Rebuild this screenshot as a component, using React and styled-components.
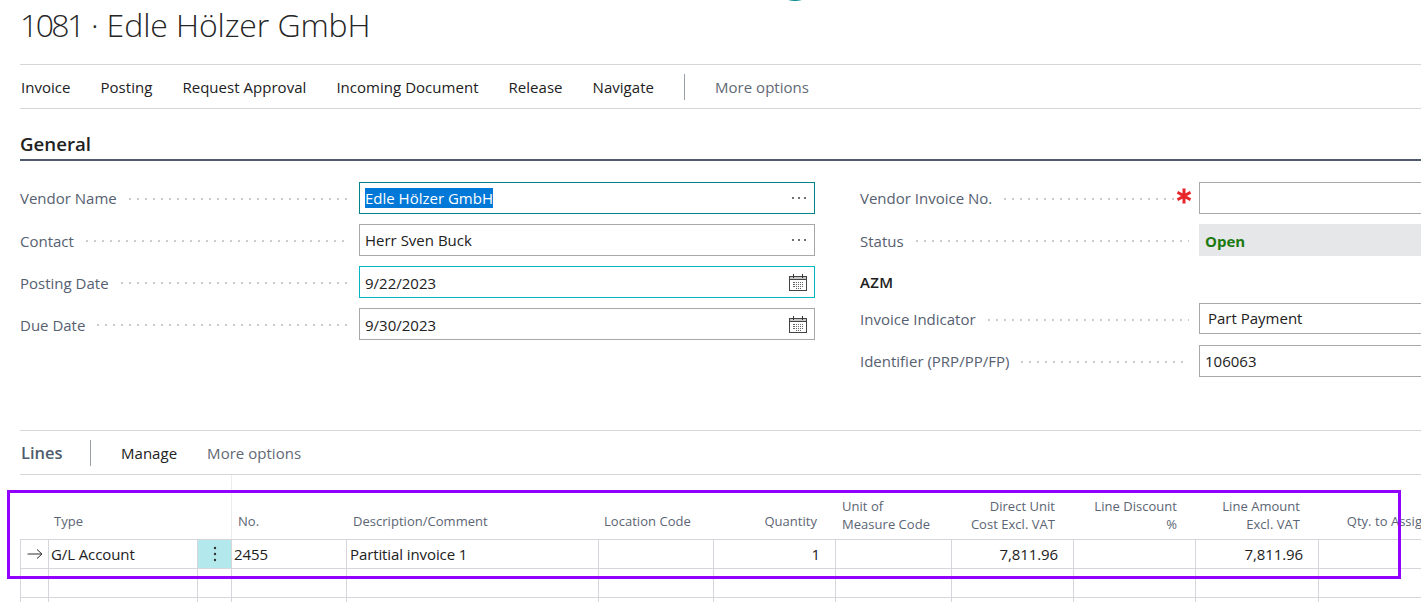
import React from "react";
import styled, { createGlobalStyle } from "styled-components";

const Global = createGlobalStyle`
  html, body { margin: 0; padding: 0; background: #fff; }
  body { font-family: "Open Sans", "Liberation Sans", sans-serif; color: #212121; }
`;

const Page = styled.div`
  position: relative;
  width: 1421px;
  height: 602px;
  overflow: hidden;
  padding-left: 20px;
  box-sizing: border-box;
`;
const TopArc = styled.div`
  position: absolute;
  left: 787px;
  top: -4px;
  width: 16px;
  height: 5px;
  border-radius: 50%;
  background: #008a8f;
`;
const Title = styled.h1`
  margin: 0;
  height: 64px;
  padding-top: 4px;
  box-sizing: border-box;
  font-size: 32px;
  line-height: 42px;
  font-weight: 300;
  letter-spacing: -0.1px;
  color: #262626;
`;
const TitleNumber = styled.span`
  letter-spacing: -2.6px;
`;
const ActionBar = styled.nav`
  display: flex;
  align-items: center;
  height: 45px;
  box-sizing: border-box;
  padding-left: 1px;
  gap: 30px;
  border-top: 1px solid #d5d6da;
  border-bottom: 1px solid #d5d6da;
`;
const Action = styled.span`
  font-size: 15px;
  letter-spacing: 0.03px;
  color: ${(p) => (p.$muted ? "#5f6874" : "#212121")};
`;
const Divider = styled.span`
  width: 1px;
  height: 26px;
  background: #9aa0a8;
`;
const SectionTitle = styled.h2`
  margin: 0;
  height: 52px;
  box-sizing: border-box;
  padding-top: 22px;
  border-bottom: 2px solid #505c6d;
  font-size: 18.7px;
  line-height: 25px;
  font-weight: 600;
  color: #212121;
`;
const FormGrid = styled.div`
  display: flex;
  padding-top: 21px;
  height: 269px;
  box-sizing: border-box;
`;
const LeftColumn = styled.div`
  width: 795px;
  flex: none;
  margin-right: 45px;
  display: flex;
  flex-direction: column;
  gap: 10px;
`;
const RightColumn = styled.div`
  flex: none;
  width: 581px;
  display: flex;
  flex-direction: column;
`;
const FieldRow = styled.div`
  display: flex;
  align-items: center;
  height: ${(p) => p.$h || 32}px;
  margin-top: ${(p) => p.$mt || 0}px;
`;
const Label = styled.span`
  flex: none;
  padding-top: ${(p) => (p.$low ? 2 : 0)}px;
  font-size: 15px;
  color: #566070;
`;
const Leader = styled.span`
  flex: 1;
  height: 2px;
  margin: 2px ${(p) => p.$end ?? 10}px 0 12px;
  background-image: radial-gradient(circle at 1px 1px, #c9ccd1 0.9px, transparent 1px);
  background-size: 8px 2px;
  background-repeat: repeat-x;
`;
const Star = styled.span`
  flex: none;
  width: 28px;
  margin-left: -4px;
  display: flex;
  align-items: center;
  svg { display: block; margin-left: 5px; margin-top: -4px; }
`;
const Input = styled.div`
  flex: none;
  width: ${(p) => p.$w}px;
  height: ${(p) => p.$h || 32}px;
  box-sizing: border-box;
  border: 1px solid ${(p) => p.$border || "#a8a8a8"};
  display: flex;
  align-items: center;
  padding: 0 7px 0 ${(p) => p.$pad || 5}px;
  font-size: 15px;
  color: #212121;
  background: #fff;
`;
const InputText = styled.span`
  padding-top: ${(p) => (p.$low ? 2 : 0)}px;
  padding-bottom: ${(p) => (p.$high ? 2 : 0)}px;
`;
const Grow = styled.span`
  flex: 1;
`;
const Selected = styled.span`
  background: #0078d7;
  color: #fff;
  line-height: 21px;
`;
const StatusBox = styled.div`
  flex: none;
  width: 242px;
  height: 32px;
  display: flex;
  align-items: center;
  padding: 2px 0 0 6px;
  box-sizing: border-box;
  background: #e6e7e8;
  color: #1a7a10;
  font-size: 15px;
  font-weight: 700;
`;
const GroupCaption = styled.div`
  height: 47px;
  padding-top: 4px;
  box-sizing: border-box;
  display: flex;
  align-items: center;
  font-size: 15px;
  font-weight: 600;
  letter-spacing: 0.3px;
  color: #212121;
`;
const LinesBar = styled.div`
  display: flex;
  align-items: center;
  height: 45px;
  box-sizing: border-box;
  padding-left: 1px;
  border-top: 1px solid #d5d6da;
  border-bottom: 1px solid #d5d6da;
`;
const LinesTitle = styled.span`
  font-size: 16.5px;
  font-weight: 600;
  color: #505c6d;
  width: 69px;
`;
const LinesDivider = styled(Divider)`
  margin-right: 30px;
`;
const LinesActions = styled.div`
  display: flex;
  gap: 30px;
`;
const COLUMNS = "28px 149px 34px 115px 252px 115px 122px 116px 122px 122px 123px 130px";
const Table = styled.div`
  width: 1408px;
`;
const HeadRow = styled.div`
  display: grid;
  grid-template-columns: ${COLUMNS};
  height: 65px;
  box-sizing: border-box;
  border-bottom: 1px solid #d5d6dc;
`;
const HeadCell = styled.div`
  grid-column: ${(p) => p.$col};
  display: flex;
  align-items: flex-end;
  justify-content: ${(p) => (p.$right ? "flex-end" : "flex-start")};
  text-align: ${(p) => (p.$right ? "right" : "left")};
  white-space: nowrap;
  padding: 0 ${(p) => (p.$right ? 18 : 6)}px ${(p) => (p.$two ? 6 : 9)}px ${(p) => p.$pl ?? 6}px;
  font-size: 13px;
  line-height: 18px;
  letter-spacing: 0.03px;
  color: #5b6573;
  border-left: ${(p) => (p.$rule ? "1px solid #ededf0" : "none")};
`;
const DataRow = styled.div`
  display: grid;
  grid-template-columns: ${COLUMNS};
  height: 29px;
  box-sizing: border-box;
  border-bottom: 1px solid #d5d6dc;
`;
const Cell = styled.div`
  box-sizing: border-box;
  border-left: 1px solid #d5d6dc;
  display: flex;
  align-items: center;
  justify-content: ${(p) => (p.$right ? "flex-end" : "flex-start")};
  padding: 0 ${(p) => (p.$right ? 15 : 2)}px 0 ${(p) => p.$pl ?? 2}px;
  font-size: 15px;
  letter-spacing: -0.1px;
  color: #212121;
`;
const ArrowCell = styled(Cell)`
  justify-content: center;
  padding: 0;
`;
const MenuCell = styled(Cell)`
  justify-content: center;
  background: #b3e8ec;
  padding: 0;
`;
const Highlight = styled.div`
  position: absolute;
  left: 7px;
  top: 490px;
  width: 1394px;
  height: 89px;
  box-sizing: border-box;
  border: 3px solid #9200ff;
  pointer-events: none;
`;

const Dots = () => (
  <svg width="16" height="4" viewBox="0 0 16 4" fill="#404040">
    <circle cx="2" cy="2" r="1" />
    <circle cx="8" cy="2" r="1" />
    <circle cx="14" cy="2" r="1" />
  </svg>
);

const Calendar = () => (
  <svg width="18" height="17" viewBox="0 0 18 17" shapeRendering="crispEdges">
    <rect x="0.5" y="2.5" width="17" height="14" fill="#fff" stroke="#444" />
    <path d="M1 5.5h16" stroke="#444" />
    <rect x="1" y="3" width="16" height="2" fill="#c8c8c8" />
    <path d="M4.5 0v4M13.5 0v4" stroke="#333" />
    <path
      d="M4 8h2M7 8h1M9 8h1M11 8h1M13 8h1M4 10h2M7 10h1M9 10h1M11 10h1M13 10h1M4 12h2M7 12h1M9 12h1M11 12h1M13 12h1M7 14h1M9 14h1M11 14h1"
      stroke="#666"
      strokeWidth="1"
    />
  </svg>
);

const Asterisk = () => (
  <svg width="16" height="16" viewBox="0 0 16 16" stroke="#e8262a" strokeWidth="3">
    <path d="M8 0.5v15M1.5 4.2l13 7.6M14.5 4.2l-13 7.6" />
  </svg>
);

const Arrow = () => (
  <svg width="16" height="12" viewBox="0 0 16 12" fill="none" stroke="#333" strokeWidth="1">
    <path d="M0.5 6h14.5M10 1.5L15 6l-5 4.5" />
  </svg>
);

const Kebab = () => (
  <svg width="4" height="16" viewBox="0 0 4 16" fill="#333">
    <circle cx="2" cy="2" r="1.2" />
    <circle cx="2" cy="8" r="1.2" />
    <circle cx="2" cy="14" r="1.2" />
  </svg>
);

const actions = ["Invoice", "Posting", "Request Approval", "Incoming Document", "Release", "Navigate"];

const leftFields = [
  { label: "Vendor Name", value: <Selected>Edle Hölzer GmbH</Selected>, border: "#008489", icon: <Dots /> },
  { label: "Contact", low: true, value: "Herr Sven Buck", icon: <Dots /> },
  { label: "Posting Date", low: true, value: "9/22/2023", border: "#00b7c3", icon: <Calendar /> },
  { label: "Due Date", low: true, value: "9/30/2023", icon: <Calendar /> },
];

const headers = [
  { col: 2, text: "Type" },
  { col: 4, text: "No.", rule: true },
  { col: 5, text: "Description/Comment", pl: 7 },
  { col: 6, text: "Location Code" },
  { col: 7, text: "Quantity", right: true },
  { col: 8, text: ["Unit of", "Measure Code"], pl: 7 },
  { col: 9, text: ["Direct Unit", "Cost Excl. VAT"], right: true },
  { col: 10, text: ["Line Discount", "%"], right: true },
  { col: 11, text: ["Line Amount", "Excl. VAT"], right: true },
  { col: 12, text: "Qty. to Assign", right: true },
];

const emptyRow = Array.from({ length: 12 }, () => "");

export default function App() {
  return (
    <Page>
      <Global />
      <TopArc />
      <Title>
        <TitleNumber>1081</TitleNumber> · Edle Hölzer GmbH
      </Title>
      <ActionBar>
        {actions.map((a) => (
          <Action key={a}>{a}</Action>
        ))}
        <Divider />
        <Action $muted>More options</Action>
      </ActionBar>
      <SectionTitle>General</SectionTitle>
      <FormGrid>
        <LeftColumn>
          {leftFields.map((f) => (
            <FieldRow key={f.label}>
              <Label $low={f.low}>{f.label}</Label>
              <Leader />
              <Input $w={456} $border={f.border}>
                <InputText $low={f.low && f.label !== "Contact"}>{f.value}</InputText>
                <Grow />
                {f.icon}
              </Input>
            </FieldRow>
          ))}
        </LeftColumn>
        <RightColumn>
          <FieldRow>
            <Label>Vendor Invoice No.</Label>
            <Leader $end={0} />
            <Star>
              <Asterisk />
            </Star>
            <Input $w={242} />
          </FieldRow>
          <FieldRow $mt={10}>
            <Label $low>Status</Label>
            <Leader />
            <StatusBox>Open</StatusBox>
          </FieldRow>
          <GroupCaption>AZM</GroupCaption>
          <FieldRow $h={31}>
            <Label>Invoice Indicator</Label>
            <Leader />
            <Input $w={242} $h={31} $pad={8}>
              <InputText $high>Part Payment</InputText>
            </Input>
          </FieldRow>
          <FieldRow $mt={11}>
            <Label>Identifier (PRP/PP/FP)</Label>
            <Leader />
            <Input $w={242}>106063</Input>
          </FieldRow>
        </RightColumn>
      </FormGrid>
      <LinesBar>
        <LinesTitle>Lines</LinesTitle>
        <LinesDivider />
        <LinesActions>
          <Action>Manage</Action>
          <Action $muted>More options</Action>
        </LinesActions>
      </LinesBar>
      <Table>
        <HeadRow>
          {headers.map((h) => (
            <HeadCell
              key={h.col}
              $col={h.col}
              $right={h.right}
              $two={Array.isArray(h.text)}
              $rule={h.rule}
              $pl={h.pl}
            >
              <div>
                {Array.isArray(h.text)
                  ? h.text.map((t) => <div key={t}>{t}</div>)
                  : h.text}
              </div>
            </HeadCell>
          ))}
        </HeadRow>
        <DataRow>
          <ArrowCell>
            <Arrow />
          </ArrowCell>
          <Cell>G/L Account</Cell>
          <MenuCell>
            <Kebab />
          </MenuCell>
          <Cell>2455</Cell>
          <Cell $pl={3}>Partitial invoice 1</Cell>
          <Cell />
          <Cell $right>1</Cell>
          <Cell />
          <Cell $right>7,811.96</Cell>
          <Cell />
          <Cell $right>7,811.96</Cell>
          <Cell />
        </DataRow>
        {[0, 1].map((r) => (
          <DataRow key={r}>
            {emptyRow.map((_, i) => (
              <Cell key={i} />
            ))}
          </DataRow>
        ))}
      </Table>
      <Highlight />
    </Page>
  );
}
